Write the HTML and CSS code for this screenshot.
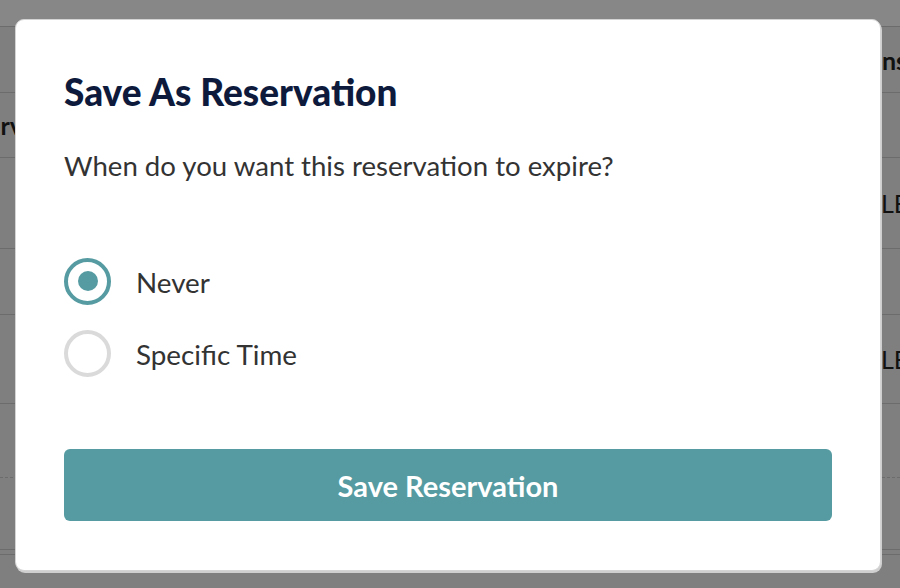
FILE: index.html
```html
<!DOCTYPE html>
<html>
<head>
<meta charset="utf-8">
<link rel="stylesheet" href="styles.css">
</head>
<body>
<div class="page">
  <div class="row r0"></div>
  <div class="row r1"><span class="spacer"></span><span class="cell-end bold">Reasons</span></div>
  <div class="row r2"><span class="cell-left bold">Serv</span></div>
  <div class="row r3"><span class="spacer"></span><span class="cell-right">LEASED</span></div>
  <div class="row r4"></div>
  <div class="row r5"><span class="spacer"></span><span class="cell-right">LEASED</span></div>
  <div class="row r6"></div>
  <div class="row r7"></div>
  <div class="row r8"></div>
</div>

<div class="modal">
  <h1 class="title">Save As Reservation</h1>
  <p class="question">When do you want this reservation to expire?</p>
  <div class="options">
    <label class="option">
      <span class="radio checked"><span class="dot"></span></span>
      <span class="option-label">Never</span>
    </label>
    <label class="option">
      <span class="radio"></span>
      <span class="option-label">Specific Time</span>
    </label>
  </div>
  <button class="save-btn">Save Reservation</button>
</div>
</body>
</html>
```

FILE: styles.css
```css
html, body {
  margin: 0;
  padding: 0;
}
body {
  width: 900px;
  height: 588px;
  overflow: hidden;
  background: #7f7f7f;
  font-family: Lato, "Open Sans", sans-serif;
  position: relative;
}
.page {
  display: flex;
  flex-direction: column;
}
.row {
  display: flex;
  align-items: center;
  box-sizing: border-box;
  border-bottom: 1px solid #6c6c6c;
  font-size: 25px;
  color: #111;
  overflow: hidden;
}
.r0 { height: 27px; background: #878787; }
.r1 { height: 66px; }
.r2 { height: 65px; }
.r3 { height: 91px; }
.r4 { height: 66px; }
.r5 { height: 89px; }
.r6 { height: 74px; border-bottom: 1px dashed #6c6c6c; }
.r7 { height: 72px; border-bottom: 1px solid #6c6c6c; }
.r8 { height: 5px; border-bottom: 1px solid #6c6c6c; }
.spacer { flex: 1; }
.bold { font-weight: 700; }
.cell-left {
  width: 23px;
  flex: none;
  display: flex;
  justify-content: flex-end;
  white-space: nowrap;
  overflow: hidden;
}
.cell-end {
  width: 24px;
  margin-right: -7px;
  flex: none;
  display: flex;
  justify-content: flex-end;
  white-space: nowrap;
  overflow: hidden;
}
.cell-right {
  width: 18px;
  flex: none;
  white-space: nowrap;
  overflow: hidden;
  text-indent: -1px;
}

.modal {
  position: absolute;
  left: 15px;
  top: 19px;
  width: 866px;
  height: 552px;
  box-sizing: border-box;
  background: #fff;
  border: 1px solid #d4d4d4;
  border-radius: 9px;
  box-shadow: 1px 2px 0 #cfcfcf;
  padding: 50px 48px 0 48px;
  display: flex;
  flex-direction: column;
}
.title {
  margin: 0;
  font-size: 37px;
  line-height: 44px;
  font-weight: 900;
  color: #0e1a3c;
}
.question {
  margin: 35px 0 0 0;
  font-size: 27.6px;
  line-height: 34px;
  color: #333;
}
.options {
  margin-top: 74px;
  display: flex;
  flex-direction: column;
  gap: 24px;
}
.option {
  display: flex;
  align-items: center;
  height: 48px;
  gap: 25px;
}
.radio {
  width: 47px;
  height: 47px;
  box-sizing: border-box;
  border-radius: 50%;
  border: 4px solid #dadada;
  display: flex;
  align-items: center;
  justify-content: center;
  flex: none;
}
.radio.checked { border-color: #559ba1; }
.dot {
  width: 20px;
  height: 20px;
  border-radius: 50%;
  background: #559ba1;
}
.option-label {
  font-size: 27.8px;
  color: #333;
  padding-top: 2px;
}
.save-btn {
  margin-top: 72px;
  height: 72px;
  width: 768px;
  border: none;
  border-radius: 6px;
  background: #559ba1;
  color: #fff;
  font-family: Lato, "Open Sans", sans-serif;
  font-weight: 700;
  font-size: 29px;
  padding: 0;
}
```
